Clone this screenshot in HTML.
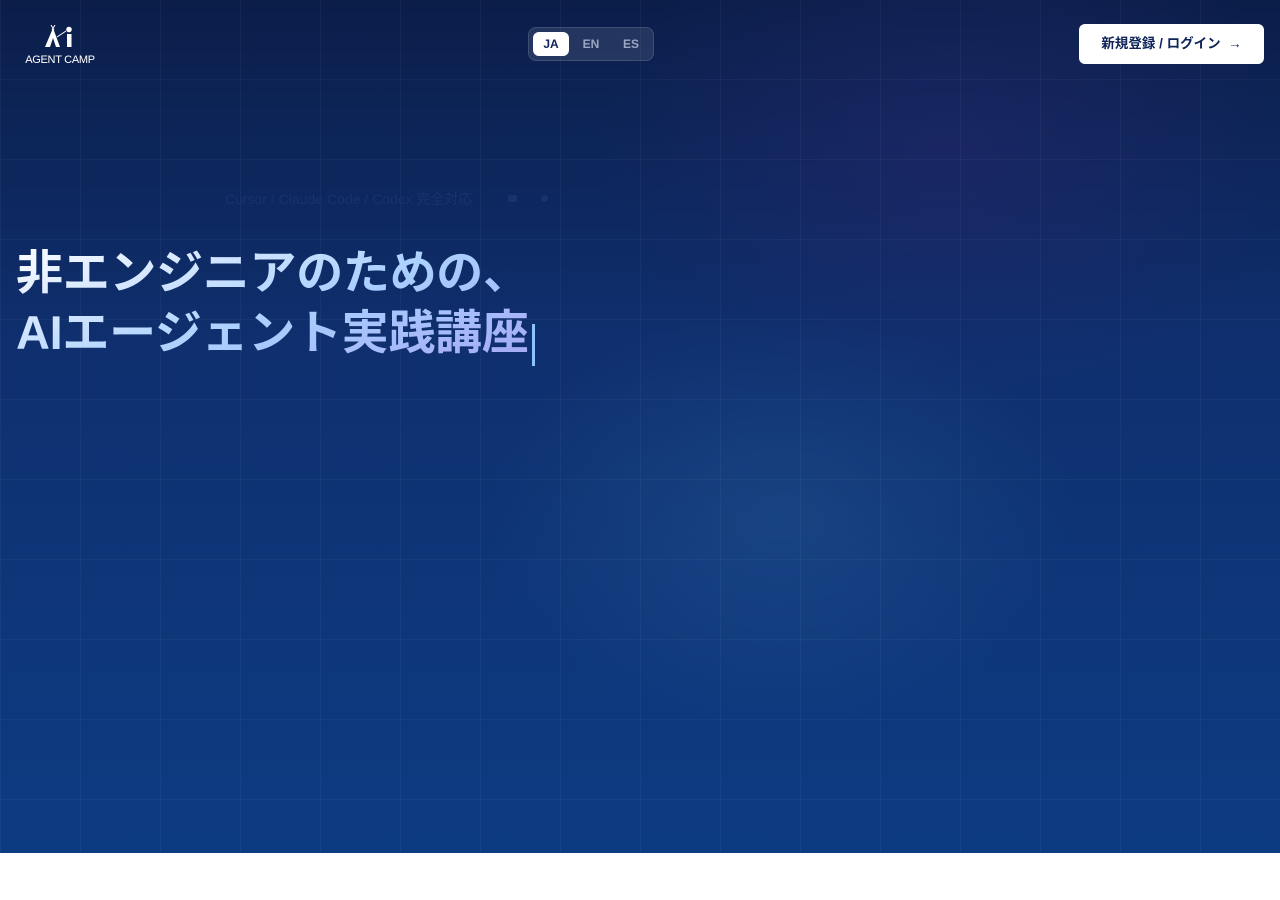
<!DOCTYPE html>
<html><head><meta charset="utf-8"><style>
*{margin:0;padding:0;box-sizing:border-box}
body{width:1280px;height:900px;background:#fff;font-family:"Liberation Sans","Noto Sans CJK JP",sans-serif;overflow:hidden}
.hero{position:absolute;left:0;top:0;width:1280px;height:853px;
background:
radial-gradient(ellipse 420px 300px at 780px 520px,rgba(40,90,150,.4),transparent 70%),
radial-gradient(ellipse 500px 350px at 950px 150px,rgba(40,40,110,.45),transparent 70%),
linear-gradient(180deg,#0b1e4a 0%,#0f2f6e 40%,#0e3679 70%,#0d3b82 100%);}
.grid{position:absolute;inset:0;background-image:linear-gradient(90deg,rgba(255,255,255,.035) 1px,transparent 1px),linear-gradient(0deg,rgba(255,255,255,.035) 1px,transparent 1px);background-size:80px 80px}
.logo{position:absolute;left:24px;top:25px;width:72px;color:#fff;text-align:center}
.logo .t{font-size:11px;letter-spacing:-.3px;margin-top:0px;line-height:12px}
.lang{position:absolute;left:528px;top:27px;width:126px;height:34px;border-radius:8px;background:rgba(255,255,255,.1);border:1px solid rgba(255,255,255,.12)}
.lang span{position:absolute;top:4px;height:24px;line-height:24px;font-size:12px;font-weight:bold;color:#9aa6c2;text-align:center;width:36px}
.lang .on{background:#fff;color:#0e2458;border-radius:6px}
.btn{position:absolute;left:1079px;top:24px;width:185px;height:40px;background:#fff;border-radius:6px;color:#0e2458;font-size:13.5px;font-weight:bold;line-height:40px;text-align:center}
.sub{position:absolute;left:225px;top:189px;font-size:14px;color:#17346e}
.dot{position:absolute;top:195px;width:9px;height:7px;background:#17346e;border-radius:2px}
h1{position:absolute;left:16px;top:243px;font-size:47px;line-height:60px;font-weight:bold;letter-spacing:-.3px;white-space:nowrap;
background:linear-gradient(160deg,#ffffff 0%,#d7e8ff 25%,#a9d0ff 55%,#a5a8f5 100%);-webkit-background-clip:text;background-clip:text;color:transparent}
.cur{position:absolute;left:532px;top:324px;width:3px;height:42px;background:#8fc0ff}
</style></head><body>
<div class="hero"><div class="grid"></div>
<div class="logo">
<svg width="72" height="24" viewBox="0 0 72 24"><path d="M29 3 L36 22 L32 22 L29 13 L26 22 L21 22 Z" fill="#fff"/><path d="M27 0 L30 5 M31 0 L28 5" stroke="#fff" stroke-width="1"/><line x1="33" y1="12" x2="42" y2="6" stroke="#fff" stroke-width="1"/><circle cx="45" cy="4.5" r="2.8" fill="#fff"/><rect x="43" y="9" width="4.5" height="13" fill="#fff"/></svg>
<div class="t">AGENT CAMP</div></div>
<div class="lang"><span class="on" style="left:4px">JA</span><span style="left:44px">EN</span><span style="left:84px">ES</span></div>
<div class="btn">新規登録 / ログイン &nbsp;→</div>
<div class="sub">Cursor / Claude Code / Codex 完全対応</div>
<div class="dot" style="left:508px"></div><div class="dot" style="left:541px;width:7px;border-radius:50%"></div>
<h1>非エンジニアのための、<br>AIエージェント実践講座</h1>
<div class="cur"></div>
</div>
</body></html>
